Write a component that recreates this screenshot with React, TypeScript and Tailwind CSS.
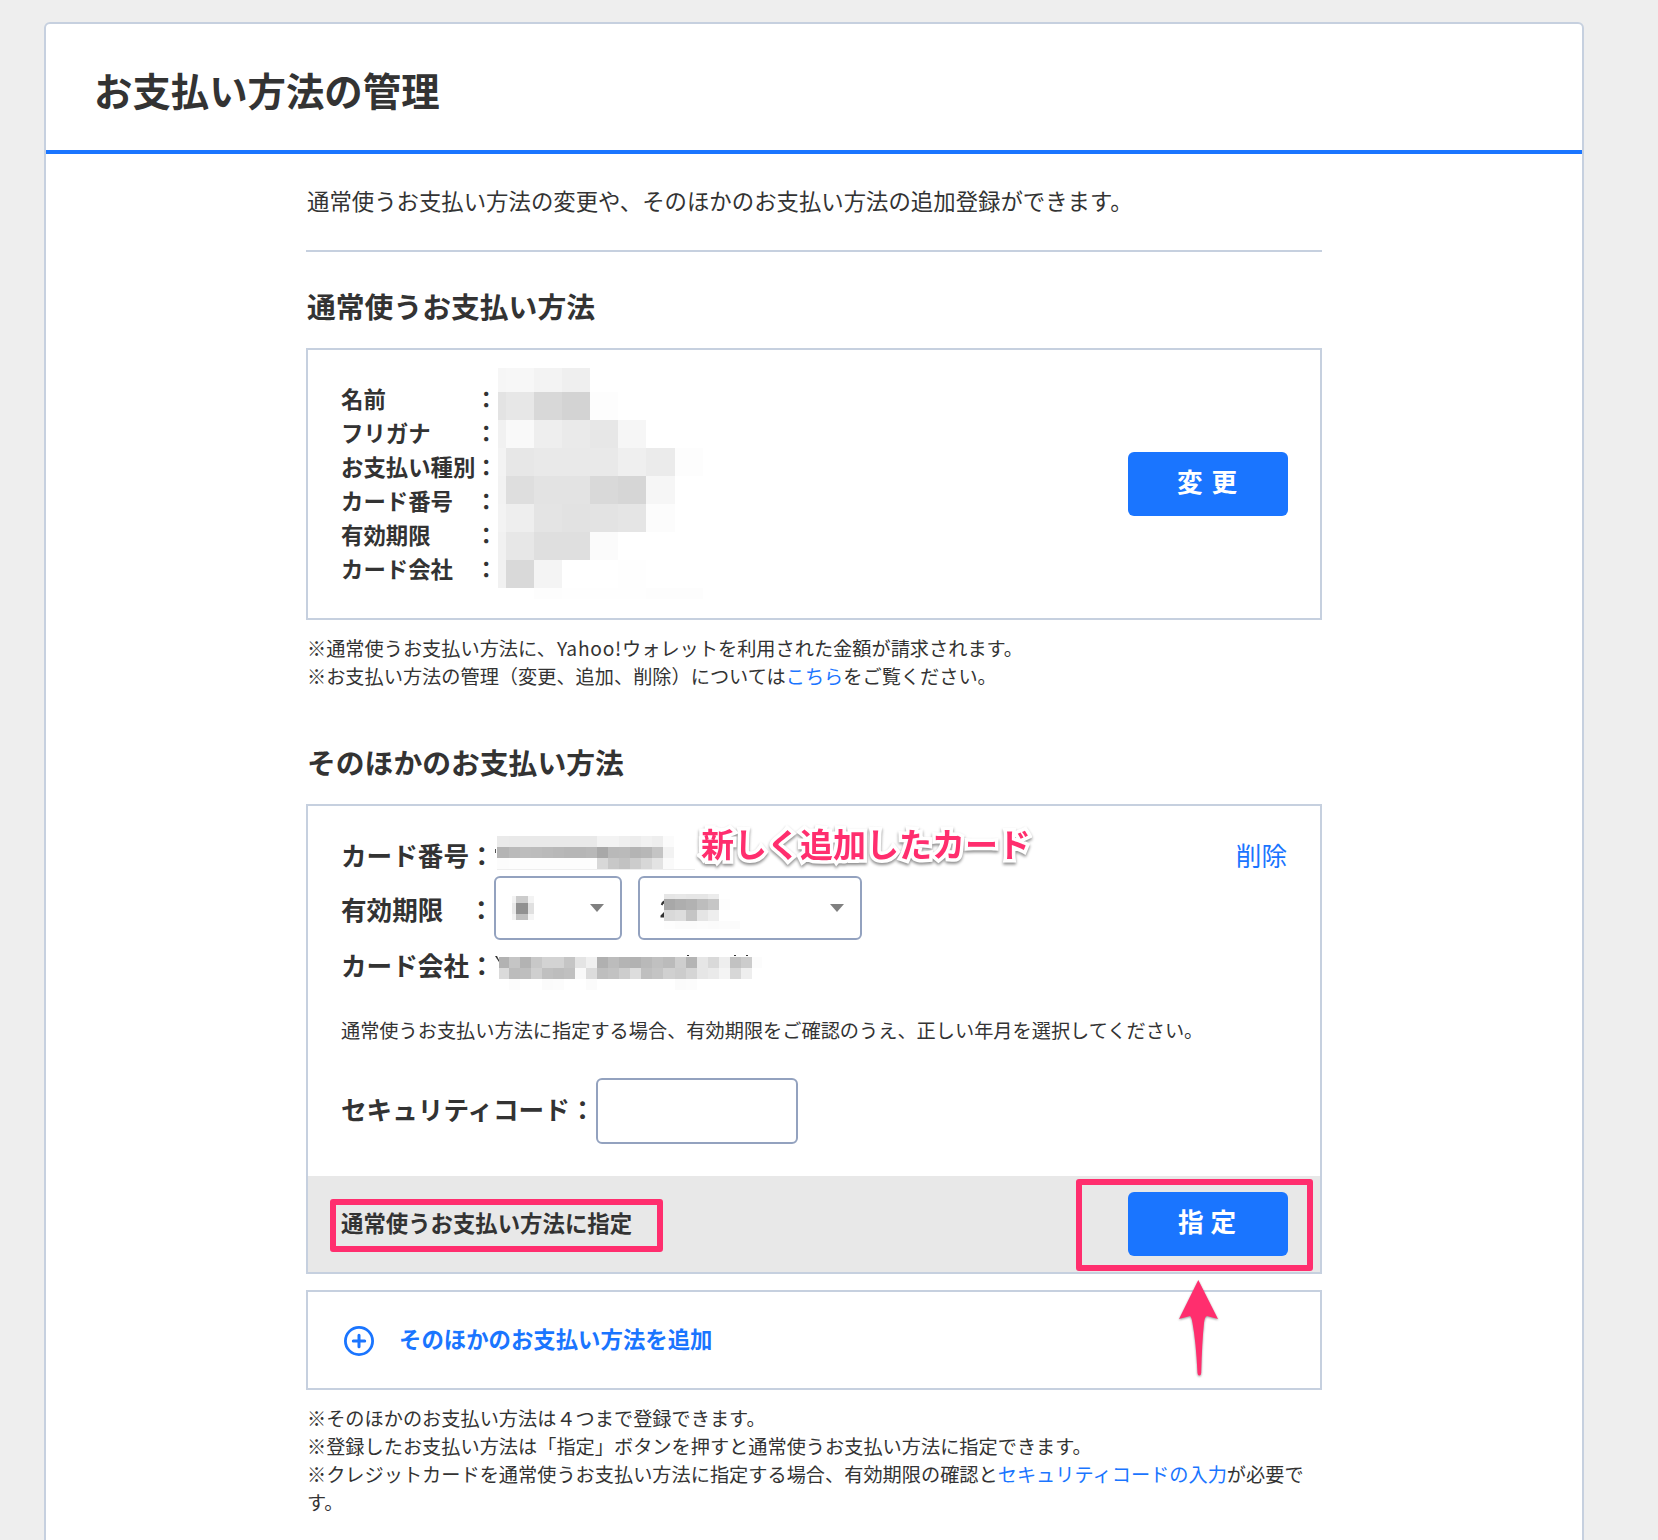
import type { ReactNode } from 'react';

type Cells = { x: number[]; y: number[]; rows: (string | null)[][] };

/* Pixelated privacy mask: column edges, row edges and a grey for every cell. */
function Mosaic({ x, y, rows }: Cells) {
  const w = x[x.length - 1] - x[0];
  const h = y[y.length - 1] - y[0];
  return (
    <svg width={w} height={h} viewBox={`${x[0]} ${y[0]} ${w} ${h}`} shapeRendering="crispEdges" className="block">
      {rows.map((row, r) =>
        row.map((c, i) =>
          c ? (
            <rect
              key={`${r}-${i}`}
              x={x[i]}
              y={y[r]}
              width={x[i + 1] - x[i]}
              height={y[r + 1] - y[r]}
              fill={`#${c}${c}${c}`}
            />
          ) : null,
        ),
      )}
    </svg>
  );
}

const profileMask: Cells = {
  x: [0, 8, 36, 64, 92, 120, 148, 177, 205],
  y: [0, 24, 52, 80, 108, 136, 164, 192, 220, 231],
  rows: [
    ['f6', 'f7', 'f3', 'ef', null, null, null, null],
    ['e3', 'e7', 'd8', 'd3', 'fd', null, null, null],
    ['f1', 'f9', 'ee', 'ea', 'e7', 'f6', null, null],
    ['f3', 'e7', 'e9', 'e9', 'e9', 'ef', 'eb', 'fd'],
    ['f2', 'de', 'e3', 'e3', 'd9', 'd6', 'f6', null],
    ['f3', 'ee', 'e4', 'e2', 'e3', 'e5', 'fc', null],
    ['f1', 'e7', 'df', 'df', 'fb', null, null, null],
    ['f1', 'd9', 'f4', null, null, 'fe', null, null],
    [null, null, 'fd', 'fe', 'fe', 'fe', 'fd', 'fd'],
  ],
};

const numberMask: Cells = {
  x: [0, 12, 23, 34, 45, 56, 67, 78, 89, 100, 111, 122, 133, 144, 155, 166, 177],
  y: [0, 11, 22, 33],
  rows: [
    ['ea', 'e9', 'e9', 'e9', 'e9', 'e9', 'e9', 'e9', 'e9', 'f3', 'f3', 'ef', 'ed', 'f1', 'ee', 'fb'],
    ['b4', 'ba', 'bd', 'bc', 'ba', 'b8', 'b6', 'b6', 'b8', 'a8', 'b9', 'ba', 'b4', 'b7', 'c4', 'f2'],
    ['fc', 'fd', 'fd', 'fd', 'fd', 'fd', 'fd', 'fd', 'fd', 'd8', 'c8', 'c2', 'cc', 'd7', 'e3', 'fa'],
  ],
};

const monthMask: Cells = {
  x: [0, 4, 16, 22],
  y: [0, 7, 18, 24],
  rows: [
    ['f3', 'cc', 'f3'],
    ['e9', '91', 'e0'],
    ['f3', 'c0', 'f5'],
  ],
};

const yearMask: Cells = {
  x: [0, 11, 22, 33, 44, 55, 66, 76],
  y: [0, 5, 16, 27, 35],
  rows: [
    ['e6', 'e8', 'e6', 'e6', 'ec', null, null],
    ['a8', 'ae', 'b2', 'bd', 'c6', 'fd', null],
    ['d9', 'dd', 'c5', 'e5', 'ee', null, null],
    ['fd', 'fb', 'fb', 'fc', 'fb', 'fc', 'fb'],
  ],
};

const companyMask: Cells = {
  x: [0, 10, 21, 32, 43, 54, 65, 76, 87, 98, 109, 120, 131, 142, 153, 164, 176, 187, 198, 209, 220, 231, 242, 253, 263],
  y: [0, 11, 22, 33],
  rows: [
    ['b2', 'c5', 'b3', 'c8', 'd3', 'd3', 'c5', 'e4', 'f0', 'b0', 'bc', 'b4', 'b2', 'b9', 'c0', 'bb', 'ce', 'b4', 'e6', 'd9', 'ee', 'c2', 'cc', 'fc'],
    ['da', 'bc', 'be', 'cf', 'c0', 'bd', 'c0', 'f9', 'dc', 'be', 'c2', 'cd', 'dd', 'bf', 'c4', 'd0', 'cc', 'd5', 'e6', 'ea', 'f4', 'd7', 'ee', null],
    [null, 'fc', null, null, 'fb', 'fc', null, null, 'fb', null, null, null, null, null, null, null, 'fb', 'fc', null, null, null, null, null, null],
  ],
};

function PrimaryButton({ chars, gap }: { chars: [string, string]; gap: string }) {
  return (
    <button className={`flex h-16 w-40 items-center justify-center rounded-md bg-[#1a75ff] pr-0.5 pb-1.5 text-[25.6px] leading-10 font-bold text-white ${gap}`}>
      <span>{chars[0]}</span>
      <span>{chars[1]}</span>
    </button>
  );
}

function Heading({ children }: { children: ReactNode }) {
  return <h2 className="pl-px text-[28.8px] leading-[42px] font-bold">{children}</h2>;
}

function Link({ children }: { children: ReactNode }) {
  return <a className="text-[#1a75ff]">{children}</a>;
}

function Caret() {
  return (
    <svg width="14" height="8" viewBox="0 0 14 8" className="block">
      <path d="M0 0H14L7 8Z" fill="#808080" />
    </svg>
  );
}

const profileLabels = ['名前', 'フリガナ', 'お支払い種別', 'カード番号', '有効期限', 'カード会社'];

export default function App() {
  return (
    <div className="h-[1540px] w-[1658px] overflow-hidden bg-[#eee] pt-[22px] pl-11 text-[#333] [font-family:'Noto_Sans_CJK_JP',sans-serif]">
      <main className="h-[1600px] w-[1540px] rounded-md border-2 border-[#c6d0df] bg-white">
        <header className="flex h-[130px] items-center border-b-4 border-[#1a75ff] pt-1 pl-12">
          <h1 className="text-[38.4px] leading-[56px] font-bold">お支払い方法の管理</h1>
        </header>

        <div className="mx-auto w-[1016px]">
          <p className="mt-[29px] pl-px text-[22.4px] leading-[34px]">
            通常使うお支払い方法の変更や、そのほかのお支払い方法の追加登録ができます。
          </p>
          <div className="mt-[33px] mb-[33px] h-0.5 bg-[#c6d0df]" />

          <Heading>通常使うお支払い方法</Heading>
          <section className="mt-[21px] flex h-[272px] items-center border-2 border-[#c6d0df] pr-8 pl-[33px]">
            <dl className="mb-0.5 w-[134px] text-[22.4px] leading-[34px] font-bold">
              {profileLabels.map((l) => (
                <dt key={l} className="whitespace-nowrap">{l}</dt>
              ))}
            </dl>
            <div className="mb-0.5 w-[23px] text-[22.4px] leading-[34px] font-bold">
              {profileLabels.map((l) => (
                <div key={l}>：</div>
              ))}
            </div>
            <div className="mb-px">
              <Mosaic {...profileMask} />
            </div>
            <div className="ml-auto">
              <PrimaryButton chars={['変', '更']} gap="gap-[9px]" />
            </div>
          </section>

          <div className="mt-3.5 pl-px text-[19.2px] leading-7">
            <p>
              ※通常使うお支払い方法に、<span className="ml-px tracking-[0.75px]">Yahoo!</span>ウォレットを利用された金額が請求されます。
            </p>
            <p>
              ※お支払い方法の管理（変更、追加、削除）については<Link>こちら</Link>をご覧ください。
            </p>
          </div>

          <div className="mt-[51px]">
            <Heading>そのほかのお支払い方法</Heading>
          </div>
          <section className="mt-[21px] h-[470px] border-2 border-[#c6d0df]">
            <div className="px-8 pt-[27px] text-[25.6px]">
              <div className="relative flex h-[43px] items-start leading-[43px]">
                <span className="w-[154px] pl-px font-bold whitespace-nowrap">カード番号：</span>
                <div className="mt-[3px] ml-[3px] flex">
                  <Mosaic {...numberMask} />
                </div>
                <span className="absolute top-4 left-[155px] h-1 w-px bg-[#555]" />
                <span className="absolute top-9 left-[157px] h-px w-[198px] bg-[#eee]" />
                <span className="absolute -top-[14px] left-[361px] text-[33px] leading-[48px] font-bold whitespace-nowrap text-[#ff2e6e] [-webkit-text-stroke:7px_white] [paint-order:stroke_fill] [stroke-linejoin:round] [filter:drop-shadow(0_2px_1.5px_rgba(0,0,0,0.45))]">
                  新しく追加したカード
                </span>
                <span className="ml-auto pr-px text-[#1a75ff]">削除</span>
              </div>
              <div className="flex h-16 items-center">
                <span className="mt-0.5 flex w-[154px] justify-between pl-px font-bold">
                  <span>有効期限</span>
                  <span>：</span>
                </span>
                <div className="flex h-16 w-32 items-center justify-between rounded-md border-2 border-[#93a2bf] pr-4 pl-4">
                  <Mosaic {...monthMask} />
                  <Caret />
                </div>
                <div className="ml-4 flex h-16 w-56 items-center rounded-md border-2 border-[#93a2bf] pr-4 pl-5">
                  <svg width="4" height="18" viewBox="0 0 4 18" className="mt-0.5">
                    <path d="M4 .5Q1.500 1.500 .8 4.500L2.500 5.500Q3 4 4 3.500ZM4 12L.5 15.500V17.500H4Z" fill="#333" />
                  </svg>
                  <div className="mt-[7px]">
                    <Mosaic {...yearMask} />
                  </div>
                  <span className="ml-auto">
                    <Caret />
                  </span>
                </div>
              </div>
              <div className="relative flex h-[50px] items-start leading-[50px]">
                <span className="w-[154px] pl-px font-bold whitespace-nowrap">カード会社：</span>
                <svg width="4" height="6" viewBox="0 0 4 6" className="absolute top-4 left-[155px]">
                  <path d="M0 0H2L4 4V6Z" fill="#333" />
                </svg>
                <span className="absolute top-[15px] left-[347px] h-px w-0.5 bg-[#333]" />
                <span className="absolute top-[15px] left-[394px] h-px w-0.5 bg-[#333]" />
                <span className="absolute top-[15px] left-[406px] h-px w-0.5 bg-[#333]" />
                <div className="mt-[17px] ml-[5px]">
                  <Mosaic {...companyMask} />
                </div>
              </div>
              <p className="mt-[26px] pl-px text-[19.2px] leading-7">
                通常使うお支払い方法に指定する場合、有効期限をご確認のうえ、正しい年月を選択してください。
              </p>
              <div className="mt-[34px] flex h-[66px] items-center">
                <label className="w-64 pb-1 pl-px font-bold whitespace-nowrap">セキュリティコード：</label>
                <div className="h-[66px] w-[202px] rounded-md border-2 border-[#93a2bf] bg-white" />
              </div>
            </div>
            <div className="relative mt-8 flex h-24 items-center justify-between bg-[#e8e8e8] px-8">
              <span className="pb-1 pl-px text-[22.4px] leading-8 font-bold">通常使うお支払い方法に指定</span>
              <PrimaryButton chars={['指', '定']} gap="gap-[7px]" />
              <span className="absolute top-[23px] left-[22px] h-[53px] w-[333px] rounded-[3px] border-6 border-[#ff2e6e]" />
              <span className="absolute top-[3px] left-[768px] h-[92px] w-[237px] rounded-[3px] border-6 border-[#ff2e6e]" />
              <svg width="48" height="104" viewBox="-4 -2 48 104" className="absolute top-[102px] left-[867px] z-10 [filter:drop-shadow(0_1.5px_1px_rgba(0,0,0,0.4))]">
                <path d="M19.3 0L39 39L28 36Q25.5 37 25 43Q23 62 22.2 93Q22 95.5 20.3 95.5Q18.700 95.500 18.500 93Q17 62 13.500 43Q12.500 37 11 36L0 39Z" fill="#ff2e6e" />
              </svg>
            </div>
          </section>

          <section className="mt-4 flex h-[100px] items-center border-2 border-[#c6d0df] pl-9">
            <svg width="30" height="30" viewBox="0 0 30 30" className="mt-0.5" fill="none" stroke="#1a75ff">
              <circle cx="15" cy="15" r="13.6" strokeWidth="2.8" />
              <path d="M9.300 15H20.700M15 9.300V20.700" strokeWidth="3" strokeLinecap="round" />
            </svg>
            <span className="ml-[25px] pb-1 text-[22.4px] leading-8 font-bold text-[#1a75ff]">そのほかのお支払い方法を追加</span>
          </section>

          <div className="mt-3.5 pl-px text-[19.2px] leading-7">
            <p>※そのほかのお支払い方法は４つまで登録できます。</p>
            <p>※登録したお支払い方法は「指定」ボタンを押すと通常使うお支払い方法に指定できます。</p>
            <p>
              ※クレジットカードを通常使うお支払い方法に指定する場合、有効期限の確認と<Link>セキュリティコードの入力</Link>が必要です。
            </p>
          </div>
        </div>
      </main>
    </div>
  );
}
